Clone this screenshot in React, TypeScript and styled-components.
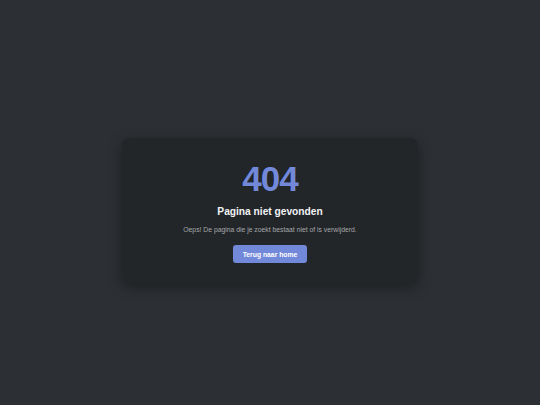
import styled, { createGlobalStyle } from "styled-components";

const GlobalStyle = createGlobalStyle`
	html,
	body {
		margin: 0;
		padding: 0;
		background: #2c2f33;
	}

	body {
		font-family: "Liberation Sans", Arial, sans-serif;
	}
`;

const Page = styled.main`
	min-height: 100vh;
	box-sizing: border-box;
	padding-top: 16px;
	display: flex;
	align-items: center;
	justify-content: center;
	background: #2c2f33;
`;

const Card = styled.section`
	width: 296px;
	box-sizing: border-box;
	padding: 23px 16px 20px;
	display: flex;
	flex-direction: column;
	align-items: center;
	text-align: center;
	background: #232629;
	border-radius: 8px;
	box-shadow: 0 4px 14px rgba(0, 0, 0, 0.35);
`;

const Code = styled.h1`
	margin: 0;
	font-size: 35px;
	line-height: 1;
	font-weight: 700;
	letter-spacing: -1px;
	color: #7289da;
`;

const Title = styled.h2`
	margin: 10.5px 0 0;
	font-size: 10.2px;
	line-height: 1.2;
	font-weight: 700;
	color: #f2f3f5;
`;

const Message = styled.p`
	margin: 7px 0 0;
	font-size: 6.8px;
	line-height: 1.4;
	color: #a3a6aa;
`;

const HomeButton = styled.a`
	margin-top: 10.5px;
	height: 18px;
	padding: 0 10px;
	display: inline-flex;
	align-items: center;
	border-radius: 3px;
	background: #7289da;
	color: #ffffff;
	font-size: 6.8px;
	font-weight: 700;
	text-decoration: none;
	cursor: pointer;

	&:hover {
		background: #677bc4;
	}
`;

export default function App() {
	return (
		<>
			<GlobalStyle />
			<Page>
				<Card>
					<Code>404</Code>
					<Title>Pagina niet gevonden</Title>
					<Message>Oeps! De pagina die je zoekt bestaat niet of is verwijderd.</Message>
					<HomeButton href="#">Terug naar home</HomeButton>
				</Card>
			</Page>
		</>
	);
}
